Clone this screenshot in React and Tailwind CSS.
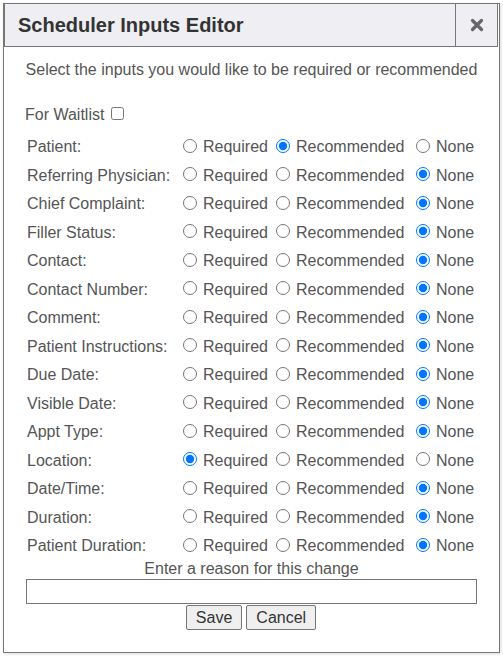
import React, { useState } from "react";

const FIELDS = [
  ["Patient:", "rec"],
  ["Referring Physician:", "none"],
  ["Chief Complaint:", "none"],
  ["Filler Status:", "none"],
  ["Contact:", "none"],
  ["Contact Number:", "none"],
  ["Comment:", "none"],
  ["Patient Instructions:", "none"],
  ["Due Date:", "none"],
  ["Visible Date:", "none"],
  ["Appt Type:", "none"],
  ["Location:", "req"],
  ["Date/Time:", "none"],
  ["Duration:", "none"],
  ["Patient Duration:", "none"],
];

const FieldRow = ({ label, value, onChange, idx }) => {
  const name = "field" + idx;
  return (
    <div className="flex items-center h-[28.5px]">
      <span className="w-[151px] shrink-0">{label}</span>
      <label className="w-[93px] shrink-0 flex items-center">
        <input
          type="radio"
          name={name}
          checked={value === "req"}
          onChange={() => onChange("req")}
          className="ml-[5px] mr-[6px] -mt-[3px] w-[14px] h-[14px] accent-[#0075ff]"
        />
        Required
      </label>
      <label className="w-[140px] shrink-0 flex items-center">
        <input
          type="radio"
          name={name}
          checked={value === "rec"}
          onChange={() => onChange("rec")}
          className="ml-[5px] mr-[6px] -mt-[3px] w-[14px] h-[14px] accent-[#0075ff]"
        />
        Recommended
      </label>
      <label className="flex items-center">
        <input
          type="radio"
          name={name}
          checked={value === "none"}
          onChange={() => onChange("none")}
          className="ml-[5px] mr-[6px] -mt-[3px] w-[14px] h-[14px] accent-[#0075ff]"
        />
        None
      </label>
    </div>
  );
};

export default function App() {
  const [values, setValues] = useState(FIELDS.map((f) => f[1]));
  const [waitlist, setWaitlist] = useState(false);
  const [reason, setReason] = useState("");

  const setValue = (i, v) => {
    const next = [...values];
    next[i] = v;
    setValues(next);
  };

  return (
    <div
      className="w-[503px] h-[656px] bg-white overflow-hidden pt-[3px] pl-[3px]"
      style={{ fontFamily: '"Liberation Sans", Arial, sans-serif' }}
    >
      <div className="w-[497px] h-[650px] flex flex-col border border-[#777] bg-white shadow-[1px_1px_3px_rgba(0,0,0,0.15)]">
        {/* Header */}
        <div className="flex h-[44px] -mt-[1px] mr-[1px] border border-[#777] bg-[#eeeef3]">
          <h2 className="flex-1 flex items-center pl-[13px] text-[20px] font-bold text-[#333]">
            Scheduler Inputs Editor
          </h2>
          <button className="w-[42px] border-l border-[#777] flex items-center justify-center">
            <svg width="14" height="14" viewBox="0 0 14 14">
              <path
                d="M2.5 2.5 L11.5 11.5 M11.5 2.5 L2.5 11.5"
                stroke="#666"
                strokeWidth="3.2"
                strokeLinecap="round"
              />
            </svg>
          </button>
        </div>

        {/* Body */}
        <div className="flex flex-col text-[16px] text-[#555] pt-[14px]">
          <p className="text-center leading-[18px]">
            Select the inputs you would like to be required or recommended
          </p>

          <div className="flex items-center h-[28px] mt-[22px] pl-[21px]">
            For Waitlist
            <input
              type="checkbox"
              checked={waitlist}
              onChange={(e) => setWaitlist(e.target.checked)}
              className="ml-[7px] -mt-[4px] w-[13px] h-[13px]"
            />
          </div>

          <div className="flex flex-col pl-[23px] mt-[4px]">
            {FIELDS.map((f, i) => (
              <FieldRow
                key={f[0]}
                idx={i}
                label={f[0]}
                value={values[i]}
                onChange={(v) => setValue(i, v)}
              />
            ))}
          </div>

          <p className="text-center leading-[18px] -mt-[1px]">
            Enter a reason for this change
          </p>
          <div className="flex justify-center mt-[1px]">
            <input
              type="text"
              value={reason}
              onChange={(e) => setReason(e.target.value)}
              className="w-[451px] h-[25px] border border-[#767676] px-1 outline-none"
            />
          </div>
          <div className="flex justify-center gap-[4px] mt-[1px] -ml-[1px]">
            <button className="h-[25px] px-[9px] bg-[#efefef] border border-[#767676] rounded-[2px] text-[#333]">
              Save
            </button>
            <button className="h-[25px] px-[9px] bg-[#efefef] border border-[#767676] rounded-[2px] text-[#333]">
              Cancel
            </button>
          </div>
        </div>
      </div>
    </div>
  );
}
